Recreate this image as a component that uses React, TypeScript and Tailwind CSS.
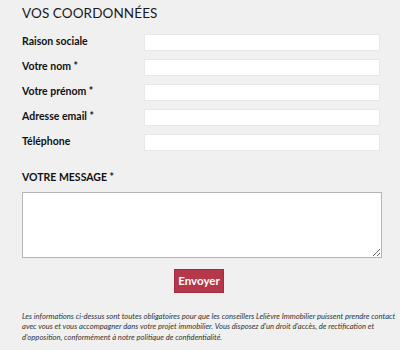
import React from "react";

export default function App() {
  const rows = [
    "Raison sociale",
    "Votre nom *",
    "Votre prénom *",
    "Adresse email *",
    "Téléphone",
  ];
  return (
    <div
      className="w-[400px] h-[350px] bg-[#f0f0f0] overflow-hidden text-[#111]"
      style={{ fontFamily: "Lato, 'Liberation Sans', sans-serif" }}
    >
      <div className="pl-[22px] pr-[18px]">
        <h2 className="pt-[5px] text-[13.5px] leading-[16px] font-normal tracking-[0.1px] text-[#1a1a1a]">
          VOS COORDONNÉES
        </h2>
        <div className="mt-[13px] flex flex-col gap-[8.5px]">
          {rows.map((r) => (
            <div key={r} className="flex items-center">
              <label className="w-[122px] text-[10.5px] font-bold text-[#111]">{r}</label>
              <input
                type="text"
                className="w-[236px] h-[16.5px] bg-white border border-[#e8e8e8] outline-none"
              />
            </div>
          ))}
        </div>
        <div className="mt-[19px] text-[10.5px] font-bold leading-[14px] text-[#111]">
          VOTRE MESSAGE *
        </div>
        <textarea className="mt-[8px] block w-[360px] h-[66px] bg-white border border-[#b4b4b4] outline-none resize-y" />
        <div className="flex justify-center mt-[11px] pr-[6px]">
          <button className="w-[50px] h-[24px] bg-[#b5374a] border border-[#a02e40] text-white text-[11.5px] font-bold">
            Envoyer
          </button>
        </div>
        <p className="mt-[18px] text-[7.65px] leading-[10.5px] italic text-[#333] whitespace-nowrap">
          Les informations ci-dessus sont toutes obligatoires pour que les conseillers Lelièvre Immobilier puissent prendre contact
          <br />
          avec vous et vous accompagner dans votre projet immobilier. Vous disposez d'un droit d'accès, de rectification et
          <br />
          d'opposition, conformément à notre politique de confidentialité.
        </p>
      </div>
    </div>
  );
}
